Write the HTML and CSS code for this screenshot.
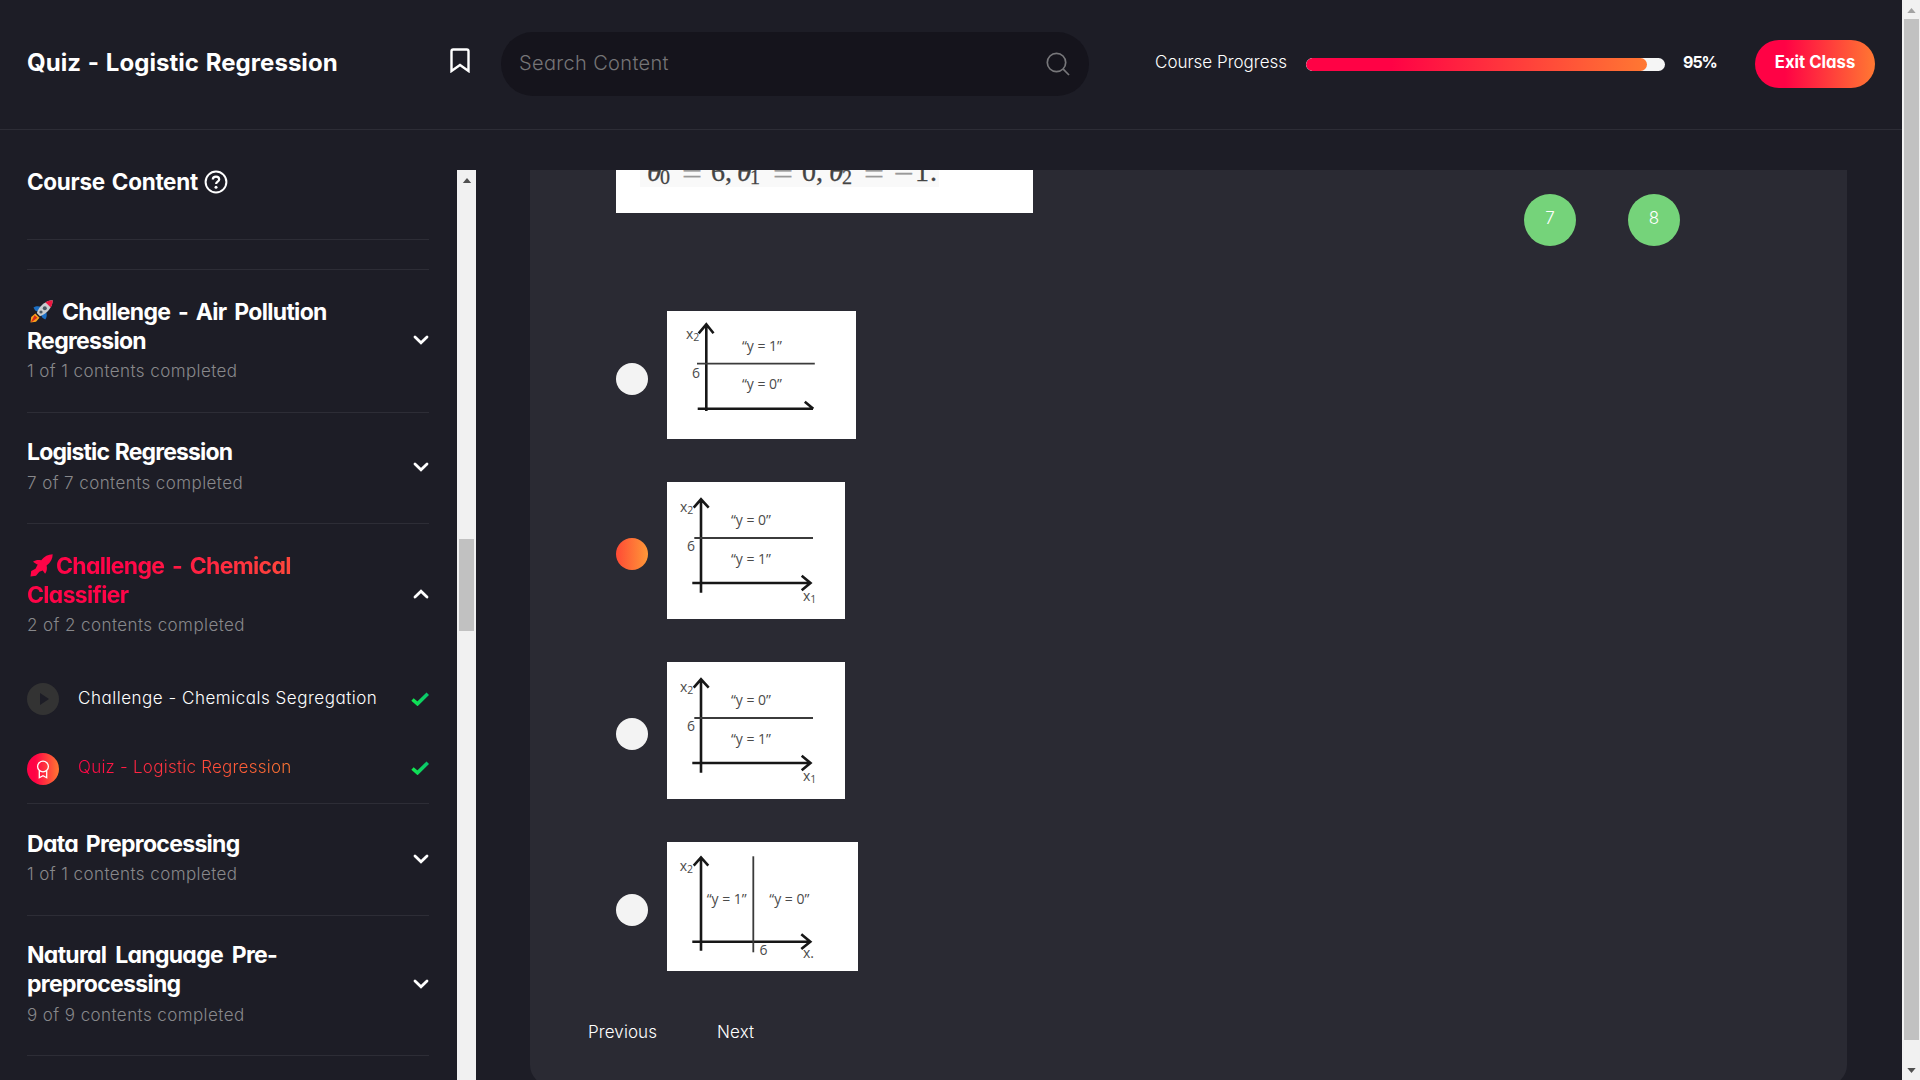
FILE: index.html
```html
<!DOCTYPE html>
<html lang="en">
<head>
<meta charset="utf-8">
<title>Quiz - Logistic Regression</title>
<link rel="stylesheet" href="styles.css">
</head>
<body>
<svg class="defs" width="0" height="0">
  <defs>
    <linearGradient id="tick" x1="0" y1="0" x2="1" y2="0"><stop offset="0" stop-color="#12e84f"/><stop offset="1" stop-color="#09c46d"/></linearGradient>
    <symbol id="chev" viewBox="0 0 16 10"><path d="M2 2l6 5.7L14 2" fill="none" stroke="#fff" stroke-width="2.8" stroke-linecap="round"/></symbol>
    <symbol id="check" viewBox="0 0 18 14"><path d="M1.5 7.5l5 4.3L16.8 1.7" fill="none" stroke="url(#tick)" stroke-width="3.6"/></symbol>
    <symbol id="graph" viewBox="0 0 178 137">
      <path class="axis" d="M34 110.7V17.5M26.7 25.7L34 17.3l7.7 8.4M25.3 101H143M134.7 93.7l8.8 7.3-8.8 7.3"/>
      <path class="thin" d="M27.3 56H146"/>
      <text x="13" y="30.3">x<tspan class="sub" dy="2">2</tspan></text>
      <text x="20" y="69">6</text>
      <text x="64" y="43" textLength="40">“y = 0”</text>
      <text x="64" y="82" textLength="40">“y = 1”</text>
      <text x="136" y="118.7">x<tspan class="sub" dy="2">1</tspan></text>
    </symbol>
  </defs>
</svg>
<div class="window">
  <div class="app">
    <header class="header">
      <h1 class="page-title">Quiz - Logistic Regression</h1>
      <svg class="bookmark" viewBox="0 0 20 25"><path d="M1.5 23V3.2c0-1 .6-1.7 1.7-1.7h13.6c1.1 0 1.7.7 1.7 1.7V23L10 17z" fill="none" stroke="#fff" stroke-width="2.4"/></svg>
      <div class="search">
        <span class="search-text">Search Content</span>
        <svg class="search-icon" viewBox="0 0 24 24"><circle cx="10.5" cy="10.5" r="9.2" fill="none" stroke="#77777a" stroke-width="1.7"/><path d="M17.2 17.2l5.8 5.8" stroke="#77777a" stroke-width="1.7"/></svg>
      </div>
      <span class="progress-label">Course Progress</span>
      <div class="bar"><div class="bar-fill" style="width:95%"></div></div>
      <span class="percent">95%</span>
      <span class="exit">Exit Class</span>
    </header>
    <div class="body">
      <aside class="sidebar">
        <div class="content-head"><h2>Course Content</h2>
          <svg class="help" viewBox="0 0 24 24"><circle cx="12" cy="12" r="10.4" fill="none" stroke="#fff" stroke-width="2"/><path d="M8.8 9.6c0-2 1.5-3 3.2-3s3.2 1.1 3.2 2.8c0 2.2-3.1 2.3-3.1 4.6" fill="none" stroke="#fff" stroke-width="2.2"/><circle cx="12" cy="17.2" r="1.5" fill="#fff"/></svg>
        </div>
        <div class="blank"></div>
        <section class="unit rocket-unit">
          <div class="names"><h3><svg class="rocket" viewBox="0 0 24 24"><path d="M3.5 8.6c2-1.7 5-1.8 7.7-.8l-3 5.200-3-1.500z" fill="#1c6fc4"/><path d="M15.300 20.500c1.700-2 1.800-5 .8-7.700l-5.200 3 1.500 3z" fill="#1c6fc4"/><path d="M22.700 1.300C16 1.500 9.500 6.500 6.800 14l3.200 3.200c7.500-2.700 12.500-9.200 12.700-15.900z" fill="#c9ccce"/><path d="M22.700 1.300c-2.800.1-5.300.8-7.300 2l5.300 5.300c1.200-2 1.900-4.500 2-7.300z" fill="#ef1740"/><circle cx="14.800" cy="9.200" r="2" fill="#4b5963"/><circle cx="11" cy="13" r="1.600" fill="#4b5963"/><path d="M5.300 14.500L1.200 18l-.7 5.500 5.500-.7 3.500-4.100z" fill="#f9a21b"/><path d="M4.600 16.300l-3.700 6.600 1.600-.4 4.900-3.700z" fill="#d42a1b"/></svg><span>Challenge - Air Pollution<br>Regression</span></h3><p>1 of 1 contents completed</p></div>
          <svg class="chev"><use href="#chev"/></svg>
        </section>
        <section class="unit short">
          <div class="names"><h3>Logistic Regression</h3><p>7 of 7 contents completed</p></div>
          <svg class="chev"><use href="#chev"/></svg>
        </section>
        <section class="unit open">
          <div class="open-head">
            <div class="names"><h3 class="hot"><svg class="rocket tight" viewBox="0 0 24 24"><path d="M22.700 1.300c-4.500 0-8.500 2.200-11.500 6-3-.8-6-.2-8.200 1.500l3.700 2.400 1 .4-2.200 4.200L1.200 18l-.7 5.500 5.500-.7 3.300-4 3.400-1.400 2.400 3.400c1.700-2.200 2.300-5.200 1.500-8.200 4-3 6.100-6.800 6.100-11.300z" fill="#ff0447"/></svg><span>Challenge - Chemical<br>Classifier</span></h3><p>2 of 2 contents completed</p></div>
            <svg class="chev up"><use href="#chev"/></svg>
          </div>
          <div class="lesson"><svg class="badge" viewBox="0 0 32 32"><circle cx="16" cy="16" r="16" fill="#333"/><path d="M13 10l9 6-9 6z" fill="#1d1d26"/></svg><span>Challenge - Chemicals Segregation</span><svg class="check"><use href="#check"/></svg></div>
          <div class="lesson quiz"><svg class="badge" viewBox="0 0 32 32"><defs><linearGradient id="hot"><stop offset=".25" stop-color="#ff0245"/><stop offset="1" stop-color="#ff7832"/></linearGradient></defs><circle cx="16" cy="16" r="16" fill="url(#hot)"/><g fill="none" stroke="#fff" stroke-width="1.300"><circle cx="16" cy="13.500" r="5.400"/><path d="M12.300 17.700v7l3.700-2 3.700 2v-7"/></g></svg><span>Quiz - Logistic Regression</span><svg class="check"><use href="#check"/></svg></div>
        </section>
        <section class="unit data">
          <div class="names"><h3>Data Preprocessing</h3><p>1 of 1 contents completed</p></div>
          <svg class="chev"><use href="#chev"/></svg>
        </section>
        <section class="unit language">
          <div class="names"><h3>Natural Language Pre-<br>preprocessing</h3><p>9 of 9 contents completed</p></div>
          <svg class="chev"><use href="#chev"/></svg>
        </section>
      </aside>
      <div class="side-scroll"><svg viewBox="0 0 10 6"><path d="M0 6l5-6 5 6z" fill="#505050"/></svg><div class="side-thumb"></div></div>
      <main class="panel">
        <div class="question">
          <svg class="formula" viewBox="0 0 417 43">
            <rect x="24" width="299" height="17" fill="#f9f9f9"/>
            <g class="math">
              <text x="31" y="11" class="theta">θ</text><text x="44" y="13.500" class="small">0</text><text x="66" y="13" textLength="20" lengthAdjust="spacingAndGlyphs" class="pale">=</text><text x="95" y="11">6,</text>
              <text x="121" y="11" class="theta">θ</text><text x="134" y="13.500" class="small">1</text><text x="157" y="13" textLength="20" lengthAdjust="spacingAndGlyphs" class="pale">=</text><text x="186" y="11">0,</text>
              <text x="213" y="11" class="theta">θ</text><text x="226" y="13.500" class="small">2</text><text x="248" y="13" textLength="20" lengthAdjust="spacingAndGlyphs" class="pale">=</text><text x="278" y="13" textLength="20" lengthAdjust="spacingAndGlyphs" class="pale">−</text><text x="299" y="11">1</text><text x="314" y="11">.</text>
            </g>
          </svg>
          <div class="jumps"><span>7</span><span>8</span></div>
        </div>
        <div class="option first"><i class="radio"></i>
          <svg class="graph" width="189" height="128" viewBox="0 0 189 128">
            <path class="axis" d="M39.300 100V13.500M31.700 22.300l7.600-9 7.200 9M30.700 97.700H146M137.800 90.700l8.500 7"/>
            <path class="thin" d="M30 52.700h117.800"/>
            <text x="19" y="28">x<tspan class="sub" dy="2">2</tspan></text><text x="25" y="66.700">6</text>
            <text x="75" y="39.700" textLength="40">“y = 1”</text><text x="75" y="78.300" textLength="40">“y = 0”</text>
          </svg></div>
        <div class="option second"><i class="radio picked"></i><svg class="graph" width="178" height="137"><use href="#graph"/></svg></div>
        <div class="option third"><i class="radio"></i><svg class="graph" width="178" height="137"><use href="#graph"/></svg></div>
        <div class="option fourth"><i class="radio"></i>
          <svg class="graph" width="191" height="129" viewBox="0 0 191 129">
            <path class="axis" d="M34 108.700V16M26.700 23.700l7.300-8.200 7.300 8.200M25.300 99.700H143M134.300 92.300l9 7.400-9 7.300"/>
            <path class="thin" d="M86.300 14.300v96"/>
            <text x="12.700" y="29">x<tspan class="sub" dy="2">2</tspan></text><text x="92.500" y="113">6</text>
            <text x="39.700" y="62.300" textLength="40">“y = 1”</text><text x="102.300" y="62.300" textLength="40">“y = 0”</text><text x="136" y="116">x.</text>
          </svg></div>
        <nav class="pager"><span>Previous</span><span>Next</span></nav>
      </main>
    </div>
  </div>
  <div class="page-scroll"><svg viewBox="0 0 10 6"><path d="M0 6l5-6 5 6z" fill="#a3a3a3"/></svg><div class="page-thumb"></div><svg viewBox="0 0 10 6"><path d="M0 0l5 6 5-6z" fill="#505050"/></svg></div>
</div>
</body>
</html>
```
FILE: styles.css
```css
* { box-sizing: border-box; }
body {
  margin: 0;
  height: 1080px;
  overflow: hidden;
  background: #1d1d26;
  color: #fff;
  font-family: Inter, "Liberation Sans", sans-serif;
  font-feature-settings: "cv11", "ss03";
  font-weight: 300;
  font-size: 17px;
}
h1, h2, h3, p { margin: 0; }
h1, h2, h3 { font-weight: 650; }
svg { display: block; flex: none; }
.defs { float: left; }
.window { display: flex; width: 1920px; height: 1080px; }
.app { width: 1902px; display: flex; flex-direction: column; }

.header { height: 130px; flex: none; display: flex; align-items: flex-start; border-bottom: 1px solid #2d2d36; padding-left: 27px; }
.header > * { flex: none; white-space: nowrap; }
.page-title { width: 423px; margin-top: 48px; font-size: 24px; line-height: 30px; letter-spacing: 0.05px; word-spacing: 1px; }
.bookmark { width: 20px; height: 25px; margin-top: 48px; }
.search { width: 588px; height: 64px; margin: 32px 0 0 31px; border-radius: 32px; background: #15141c; display: flex; align-items: center; justify-content: space-between; padding: 0 19px 0 18px; }
.search-text { color: #757577; font-size: 20px; letter-spacing: 0.35px; margin-top: -2px; }
.search-icon { width: 24px; height: 24px; }
.progress-label { width: 151px; margin: 50px 0 0 66px; line-height: 24px; }
.bar { width: 359px; height: 13px; margin-top: 58px; border-radius: 7px; background: #f5f5f5; overflow: hidden; }
.bar-fill { height: 13px; border-radius: 7px; background: linear-gradient(90deg, #ff0245 25%, #ff7832); }
.percent { width: 72px; margin: 50px 0 0 18px; line-height: 24px; font-weight: 650; font-size: 16px; letter-spacing: -1px; }
.exit { width: 120px; height: 48px; margin-top: 40px; border-radius: 24px; background: linear-gradient(90deg, #ff0245 25%, #ff7832); text-align: center; line-height: 44px; font-weight: 650; font-size: 16.700px; }

.body { flex: 1; display: flex; min-height: 0; padding-top: 40px; }
.sidebar { width: 457px; flex: none; padding-left: 27px; padding-right: 28px; overflow: hidden; }
.content-head { height: 70px; display: flex; align-items: flex-start; gap: 6px; border-bottom: 1px solid #2d2d36; }
.content-head h2 { font-size: 22.500px; line-height: 24px; letter-spacing: -0.3px; word-spacing: 2px; }
.help { width: 24px; height: 24px; }
.blank { height: 30px; border-bottom: 1px solid #2d2d36; }
.unit { height: 143px; padding-top: 25px; border-bottom: 1px solid #2d2d36; display: flex; justify-content: space-between; align-items: flex-start; }
.unit h3 { font-size: 23px; line-height: 29px; white-space: nowrap; letter-spacing: -0.7px; word-spacing: 3px; }
.unit p { margin-top: 4px; line-height: 24px; color: #88888b; white-space: nowrap; letter-spacing: 0.42px; }
.rocket { width: 24px; height: 24px; float: left; margin: 1px 8px 4px 3px; }
.rocket.tight { margin-right: 2px; }
.rocket-unit { padding-top: 28px; }
.rocket-unit p { margin-top: 3px; }
.chev { width: 16px; height: 10px; margin-top: 37px; }
.short { height: 111px; }
.short h3 { letter-spacing: -0.85px; word-spacing: 1px; }
.short .chev { margin-top: 24px; }
.open { height: 280px; padding-top: 28px; flex-direction: column; justify-content: flex-start; align-items: stretch; }
.open p { margin-top: 3px; }
.open-head { height: 130px; flex: none; display: flex; justify-content: space-between; }
.open-head .names { flex: 1; }
.up { transform: scaleY(-1); }
.hot span { background: linear-gradient(90deg, #ff0447 25%, #ff7832); -webkit-background-clip: text; background-clip: text; color: transparent; display: block; }
.lesson { height: 70px; flex: none; display: flex; align-items: flex-start; }
.lesson .badge { width: 32px; height: 32px; margin-top: 1px; }
.lesson span { line-height: 24px; margin: 4px auto 0 19px; white-space: nowrap; letter-spacing: 0.52px; }
.lesson.quiz { height: 50px; }
.quiz span { margin-top: 3px; letter-spacing: 0.24px; background: linear-gradient(90deg, #ff0447, #ff7832); -webkit-background-clip: text; background-clip: text; color: transparent; }
.check { width: 18px; height: 14px; margin-top: 10px; }
.quiz .check { margin-top: 9px; }
.data { height: 112px; padding-top: 26px; }
.data p { margin-top: 3px; }
.data .chev { margin-top: 24px; }
.language { height: 140px; }
.language h3 { word-spacing: 4px; }
.language .chev { margin-top: 38px; }

.side-scroll { width: 19px; flex: none; margin-right: 54px; background: #f1f1f1; display: flex; flex-direction: column; align-items: center; padding-top: 8px; }
.side-scroll svg { width: 10px; height: 5px; }
.side-thumb { width: 15px; height: 92px; margin-top: 356px; background: #c1c1c1; }
.page-scroll { width: 18px; background: #f1f1f1; display: flex; flex-direction: column; align-items: center; padding-top: 8px; }
.page-scroll svg { width: 9px; height: 5px; }
.page-thumb { width: 15px; height: 1021px; margin: 6px 0 28px; background: #c1c1c1; }

.panel { width: 1317px; height: 915px; flex: none; background: #2a2a33; border-radius: 0 0 20px 20px; }
.question { height: 141px; display: flex; padding-left: 86px; }
.formula { width: 417px; height: 43px; background: #fff; }
.jumps { display: flex; gap: 52px; margin: 24px 0 0 491px; }
.jumps span { width: 52px; height: 52px; border-radius: 50%; background: #75d37a; text-align: center; line-height: 48px; }
.option { height: 128px; margin-left: 86px; display: flex; gap: 19px; align-items: center; }
.second { height: 137px; margin-top: 43px; }
.third { height: 137px; margin-top: 43px; }
.fourth { height: 129px; margin-top: 43px; }
.radio { width: 32px; height: 32px; border-radius: 50%; background: #f3f3f3; margin-top: 7px; }
.picked { background: linear-gradient(90deg, #ff4a35, #fe9838); }
.graph { background: #fff; }
.axis { fill: none; stroke: #171717; stroke-width: 2.600; }
.thin { fill: none; stroke: #3b3b3b; stroke-width: 1.800; }
.graph text, #graph text { font: 14px "Open Sans", "Noto Sans", sans-serif; fill: #4b4b4b; }
.graph text .sub, #graph text .sub { font-size: 10.500px; }
.math text { font: 28px "Liberation Serif", serif; fill: #444; stroke: #444; stroke-width: 0.300; }
.math .theta { font-size: 30px; font-style: italic; }
.math .small { font-size: 20px; }
.math .pale { fill: #999; stroke: #999; }
.pager { margin: 49px 0 0 58px; display: flex; gap: 60px; line-height: 24px; letter-spacing: 0.1px; }
```
